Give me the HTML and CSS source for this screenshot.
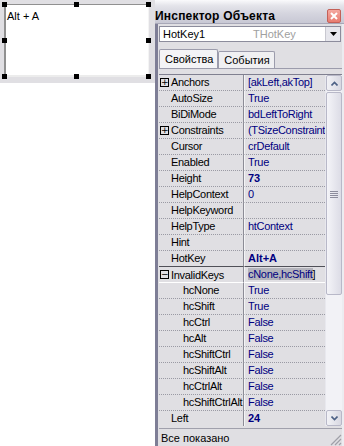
FILE: index.html
```html
<!DOCTYPE html>
<html>
<head>
<meta charset="utf-8">
<link rel="stylesheet" href="styles.css">
</head>
<body>
<div class="app">
  <div class="designer">
    <div class="form-top">
      <div class="hotkey">Alt + A</div>
      <span class="handle h-tl"></span><span class="handle h-tm"></span><span class="handle h-tr"></span>
      <span class="handle h-ml"></span><span class="handle h-mr"></span>
      <span class="handle h-bl"></span><span class="handle h-bm"></span><span class="handle h-br"></span>
    </div>
  </div>
  <div class="inspector">
    <div class="titlebar">
      <span class="title">Инспектор Объекта</span>
      <span class="close"><svg width="8" height="8" viewBox="0 0 8 8"><path d="M1 1L7 7M7 1L1 7" stroke="#fff" stroke-width="2"/></svg></span>
    </div>
    <div class="body">
      <div class="combo">
        <span class="c-name">HotKey1</span><span class="c-type">THotKey</span>
        <span class="c-btn"><svg width="7" height="4" viewBox="0 0 7 4"><path d="M0 0H7L3.5 4Z" fill="#000"/></svg></span>
      </div>
      <div class="tabs">
        <div class="tab active">Свойства</div>
        <div class="tab">События</div>
      </div>
      <div class="page">
        <div class="grid">
          <div class="rows">
            <div class="row"><div class="name"><span class="box">+</span>Anchors</div><div class="val">[akLeft,akTop]</div></div>
            <div class="row"><div class="name">AutoSize</div><div class="val">True</div></div>
            <div class="row"><div class="name">BiDiMode</div><div class="val">bdLeftToRight</div></div>
            <div class="row"><div class="name"><span class="box">+</span>Constraints</div><div class="val">(TSizeConstraints)</div></div>
            <div class="row"><div class="name">Cursor</div><div class="val">crDefault</div></div>
            <div class="row"><div class="name">Enabled</div><div class="val">True</div></div>
            <div class="row"><div class="name">Height</div><div class="val b">73</div></div>
            <div class="row"><div class="name">HelpContext</div><div class="val">0</div></div>
            <div class="row"><div class="name">HelpKeyword</div><div class="val"></div></div>
            <div class="row"><div class="name">HelpType</div><div class="val">htContext</div></div>
            <div class="row"><div class="name">Hint</div><div class="val"></div></div>
            <div class="row"><div class="name">HotKey</div><div class="val b">Alt+A</div></div>
            <div class="row sel"><div class="name"><span class="box">&minus;</span>InvalidKeys</div><div class="val edit"><span class="hl">cNone,hcShift</span>]</div></div>
            <div class="row"><div class="name sub">hcNone</div><div class="val">True</div></div>
            <div class="row"><div class="name sub">hcShift</div><div class="val">True</div></div>
            <div class="row"><div class="name sub">hcCtrl</div><div class="val">False</div></div>
            <div class="row"><div class="name sub">hcAlt</div><div class="val">False</div></div>
            <div class="row"><div class="name sub">hcShiftCtrl</div><div class="val">False</div></div>
            <div class="row"><div class="name sub">hcShiftAlt</div><div class="val">False</div></div>
            <div class="row"><div class="name sub">hcCtrlAlt</div><div class="val">False</div></div>
            <div class="row"><div class="name sub">hcShiftCtrlAlt</div><div class="val">False</div></div>
            <div class="row"><div class="name">Left</div><div class="val b">24</div></div>
          </div>
          <div class="scrollbar">
            <div class="sb-btn"><svg width="7" height="5" viewBox="0 0 7 5"><path d="M0.5 4.5L3.5 1.5L6.5 4.5" fill="none" stroke="#4d6185" stroke-width="1.6"/></svg></div>
            <div class="sb-track">
              <div class="sb-thumb"><svg width="8" height="8" viewBox="0 0 8 8"><path d="M0 1.5H8M0 3.5H8M0 5.5H8M0 7.5H8" stroke="#8c8c9c" stroke-width="1"/></svg></div>
            </div>
            <div class="sb-btn"><svg width="7" height="5" viewBox="0 0 7 5"><path d="M0.5 0.5L3.5 3.5L6.5 0.5" fill="none" stroke="#4d6185" stroke-width="1.6"/></svg></div>
          </div>
        </div>
      </div>
      <div class="status">
        <span>Все показано</span>
        <svg class="grip" width="12" height="12" viewBox="0 0 12 12"><path d="M11 1L1 11M11 5L5 11M11 9L9 11" stroke="#a0a0a8" stroke-width="1.2"/></svg>
      </div>
    </div>
  </div>
</div>
</body>
</html>
```
FILE: styles.css
```css
* { box-sizing: border-box; }
html, body { margin: 0; padding: 0; }
body {
  width: 344px;
  height: 446px;
  overflow: hidden;
  background: #fff;
  font-family: "Liberation Sans", Arial, sans-serif;
  font-size: 11px;
  color: #000;
}
.app { display: flex; height: 446px; }

.designer { width: 155px; flex: none; background: #fff; }
.form-top {
  position: relative;
  height: 83px;
  background: #e0dfe3;
  padding: 4px 0 0 4px;
}
.hotkey {
  width: 145px;
  height: 73px;
  background: #fff;
  border-top: 1px solid #909090;
  border-left: 2px solid #909090;
  border-right: 1px solid #f4f4f4;
  border-bottom: 2px solid #ececec;
  padding: 5px 0 0 1px;
  line-height: 13px;
}
.handle { position: absolute; width: 5px; height: 5px; background: #000; }
.h-tl { left: 2px; top: 2px; } .h-tm { left: 74px; top: 2px; } .h-tr { left: 146px; top: 2px; }
.h-ml { left: 2px; top: 38px; } .h-mr { left: 146px; top: 38px; }
.h-bl { left: 2px; top: 74px; } .h-bm { left: 74px; top: 74px; } .h-br { left: 146px; top: 74px; }

.inspector { flex: 1; display: flex; flex-direction: column; background: #e0dfe3; }
.titlebar {
  height: 27px;
  display: flex;
  align-items: flex-start;
  justify-content: space-between;
  background: linear-gradient(to bottom, #fafafc 0%, #e4e4ea 25%, #d4d4de 60%, #c8c8d4 100%);
  border-bottom: 1px solid #a8a8b8;
  padding: 9px 3px 0 0;
}
.title { font-weight: bold; font-size: 12px; line-height: 14px; color: #000; letter-spacing: 0.2px; }
.close {
  width: 14px; height: 14px;
  display: flex; align-items: center; justify-content: center;
  background: linear-gradient(#f4a8a0, #e87c70);
  border: 1px solid #c46058;
  border-radius: 2px;
}
.body {
  flex: 1;
  display: flex;
  flex-direction: column;
  border-left: 3px solid #7e7e96;
  border-right: 2px solid #ececf0;
  padding: 2px 0 0 1px;
}
.combo {
  height: 16px;
  margin-right: 1px;
  display: flex;
  align-items: center;
  background: #fff;
  border: 1px solid #8c8c9c;
  padding-left: 3px;
}
.c-name { width: 90px; }
.c-type { flex: 1; color: #a0a0a0; }
.c-btn {
  width: 15px; height: 14px;
  display: flex; align-items: center; justify-content: center;
  background: #e6e6ec;
  border-left: 1px solid #c8c8d0;
}
.tabs { display: flex; align-items: flex-end; height: 22px; margin-top: 4px; }
.tab {
  height: 17px;
  padding: 2px 4px 0 5px;
  border: 1px solid #9c9cac;
  border-bottom: none;
  background: #f0f0f2;
  border-radius: 2px 2px 0 0;
}
.tab.active { height: 19px; padding-top: 3px; background: #f4f4f6; }
.page {
  flex: 1;
  border-top: 1px solid #9c9cac;
  padding-top: 5px;
  display: flex;
  flex-direction: column;
}
.grid {
  height: 352px;
  display: flex;
  border-top: 1px solid #808090;
}
.rows { width: 166px; overflow: hidden; letter-spacing: -0.3px; }
.row { display: flex; height: 16px; }
.name {
  width: 85px;
  flex: none;
  padding-left: 12px;
  line-height: 15px;
  border-bottom: 1px dotted #9a9aa4;
  border-right: 1px solid #8c8c96;
  white-space: nowrap;
  overflow: hidden;
  display: flex;
  align-items: center;
}
.name.sub { padding-left: 24px; }
.box {
  width: 9px; height: 9px;
  margin-left: -11px; margin-right: 2px;
  border: 1px solid #000;
  font-size: 9px; line-height: 7px;
  text-align: center;
  display: inline-block;
  letter-spacing: 0;
  font-family: "DejaVu Sans", sans-serif;
}
.val {
  flex: 1;
  padding-left: 3px;
  line-height: 15px;
  border-left: 1px solid #f4f4f6;
  border-bottom: 1px dotted #9a9aa4;
  color: #000080;
  white-space: nowrap;
  overflow: hidden;
}
.val.b { font-weight: bold; letter-spacing: 0; }
.row.sel .name, .row.sel .val { border-top: 1px solid #505058; border-bottom: 1px solid #fff; line-height: 14px; }
.row.sel { margin-top: -1px; height: 17px; }
.hl { background: #b4b4bc; color: #000080; }
.val.edit { color: #000; }

.scrollbar {
  width: 17px;
  display: flex;
  flex-direction: column;
  background: #f2f2f6;
  border-left: 1px solid #e8e8ee;
}
.sb-btn {
  height: 16px;
  display: flex; align-items: center; justify-content: center;
  background: linear-gradient(to right, #f2f2f6, #d8d8e2);
  border: 1px solid #b8b8c8;
  border-radius: 2px;
}
.sb-track { flex: 1; padding-top: 1px; }
.sb-thumb {
  height: 203px;
  display: flex; align-items: center; justify-content: center;
  background: linear-gradient(to right, #f4f4f8, #dcdce6);
  border: 1px solid #b8b8c8;
  border-radius: 2px;
}
.status {
  height: 18px;
  margin-top: 2px;
  display: flex;
  align-items: center;
  justify-content: space-between;
  border-top: 1px solid #a0a0ac;
  padding-left: 2px;
}
.grip { align-self: flex-end; }
```
